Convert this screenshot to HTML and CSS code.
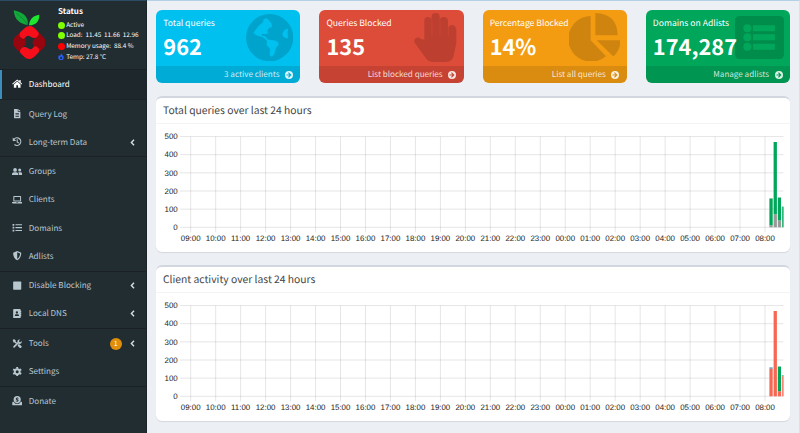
FILE: index.html
```html
<!DOCTYPE html>
<html lang="en">
<head>
<meta charset="utf-8">
<title>Dashboard</title>
<link rel="stylesheet" href="styles.css">
</head>
<body>
<svg class="defs" width="0" height="0" aria-hidden="true">
  <symbol id="go" viewBox="0 0 24 24"><path fill-rule="evenodd" d="M12 0a12 12 0 1 0 0 24 12 12 0 0 0 0-24zM11.500 4 19.500 12l-8 8-2.300-2.200 4-4.200H4.500v-3.200h8.700l-4-4.200z"/></symbol>
  <symbol id="left" viewBox="0 0 10 14"><path d="M8 1.500 2.800 7 8 12.500" fill="none" stroke="currentColor" stroke-width="2.800"/></symbol>
</svg>
<div class="page">
  <aside class="sidebar">
    <div class="panel">
      <svg class="logo" viewBox="0 0 98 147">
        <path fill="#12a83a" d="M44 45C22 42 4 30 2 1c24 4 46 18 42 44z"/>
        <path fill="#1fe62e" d="M48 46c2-20 12-29 31-32 0 20-10 31-31 32z"/>
        <path fill="none" stroke="#0b7a30" stroke-width="2" d="M10 10c18 14 26 20 34 36"/>
        <path fill="#97060f" d="M23 67C9 77 0 85 0 97s9 20 22 31c8 6 18 2 19-5-10-3-13-8-7-16 8-8 6-18-1-22-8-4-11-10-10-18zM75 128c14-10 23-18 23-30s-9-20-22-31c-8-6-18-2-19 5 10 3 13 8 7 16-8 8-6 18 1 22 8 4 11 10 10 18z"/>
        <path fill="#f60f1b" d="M22 67c8-8 17-19 28-19 10 0 16 8 25 17 5 6 0 17-10 19-8 1-12-6-19-7-8-1-9 11-16 9-10-3-13-13-8-19zM76 128c-8 8-17 19-28 19-10 0-16-8-25-17-5-6 0-17 10-19 8-1 12 6 19 7 8 1 9-11 16-9 10 3 13 13 8 19z"/>
      </svg>
      <div class="status">
        <b>Status</b>
        <span><i class="dot ok"></i>Active</span>
        <span><i class="dot ok"></i>Load:&nbsp; 11.45&nbsp; 11.66&nbsp; 12.96</span>
        <span><i class="dot bad"></i>Memory usage:&nbsp; 88.4 %</span>
        <span><svg class="flame" viewBox="0 0 12 14"><path fill-rule="evenodd" d="M6 0c0 3 5.500 5 5.500 9A5.500 5.500 0 0 1 .5 9c0-2.200.8-3.800 2-5l1 2.200C5 5 6 3 6 0zm.5 6.500C5.500 8 4 8.500 4 10.200a2.300 2.300 0 0 0 4.600 0C8.600 8.800 7 8 6.500 6.500z"/></svg>Temp: 27.8 °C</span>
      </div>
    </div>
    <nav>
      <ul class="active">
        <li><svg viewBox="0 0 18 16"><path d="M9 .8.3 8.200l1 1.200L9 3l7.700 6.400 1-1.200-2.700-2.400V1.500h-2.200v2.400zM9 4.400 3.200 9.300V15h4.300v-4.300h3V15h4.300V9.300z"/></svg>Dashboard</li>
      </ul>
      <ul>
        <li><svg viewBox="0 0 18 16"><path fill-rule="evenodd" d="M3.500 0H10v4.500h4.500V16h-11zM11 0l3.500 3.500H11zM6 7v1.200h6V7zm0 2.500v1.200h6V9.500zM6 12v1.200h6V12z"/></svg>Query Log</li>
        <li><svg viewBox="0 0 18 16"><path d="M3.700 3.500A6.600 6.600 0 1 1 4.300 13" fill="none" stroke="currentColor" stroke-width="2"/><path d="M1.300.8v6h6z"/><path d="M9 4v4.500l3 2" fill="none" stroke="currentColor" stroke-width="1.800"/></svg>Long-term Data<svg class="caret"><use href="#left"/></svg></li>
      </ul>
      <ul>
        <li><svg viewBox="0 0 18 16"><circle cx="5.300" cy="5" r="3.200"/><circle cx="13.300" cy="5.300" r="2.600"/><path d="M0 14v-1.500C0 10.300 1.600 9 3.500 9h3.700c2 0 3.600 1.300 3.600 3.500V14zM11.800 14h6.200v-1.700C18 10.300 16.700 9 15 9h-3.300l-.8.200c.7.900 1 2 1 3.200z"/></svg>Groups</li>
        <li><svg viewBox="0 0 18 16"><path fill-rule="evenodd" d="M3.300 1.500h11.400q1 0 1 1V11H2.300V2.500q0-1 1-1zM4 3.200v6.200h10V3.200zM0 12h7l.6.800h2.800L11 12h7v1q0 1.800-1.800 1.800H1.800Q0 14.800 0 13z"/></svg>Clients</li>
        <li><svg viewBox="0 0 18 16"><path d="M1 1.500h3v3H1zm0 5h3v3H1zm0 5h3v3H1zM6 2h11.500v2H6zm0 5h11.500v2H6zm0 5h11.500v2H6z"/></svg>Domains</li>
        <li><svg viewBox="0 0 18 16"><path fill-rule="evenodd" d="m9 0 7 2.800c0 6-2 10.700-7 13.200-5-2.500-7-7.200-7-13.200zm0 2.200v11.500c3.200-1.900 4.800-5 5-9.500z"/></svg>Adlists</li>
      </ul>
      <ul>
        <li><svg viewBox="0 0 18 16"><rect x="2" y="1" width="14" height="14" rx="1.300"/></svg>Disable Blocking<svg class="caret"><use href="#left"/></svg></li>
        <li><svg viewBox="0 0 18 16"><path fill-rule="evenodd" d="M3.500 0h10Q15 0 15 1.500V3h1v2.500h-1v1h1V9h-1v1h1v2.500h-1v2q0 1.500-1.500 1.500h-10Q2 16 2 14.500v-13Q2 0 3.500 0zm5 4a2 2 0 1 0 0 4 2 2 0 0 0 0-4zM5 12h7v-1c0-1.300-1-2-2-2H7c-1 0-2 .7-2 2z"/></svg>Local DNS<svg class="caret"><use href="#left"/></svg></li>
      </ul>
      <ul>
        <li><svg viewBox="0 0 18 16"><path d="m3.500 13.500 8-8" stroke="currentColor" stroke-width="2.800" stroke-linecap="round"/><path d="M16.700 3.200 14.500 5.400l-2-.4-.4-2L14.300.8c-2.300-.7-4.900.9-4.900 3.600 0 2.500 1.900 4.100 3.900 4.100 2.600 0 4.200-2.600 3.400-5.300zM1.300 2 3.300 0l3 2.300v2L9 7 7.300 8.700 4.600 6h-2zM10 10l2-1.500 4.600 4.200q.6.900-.2 1.700l-1 1q-.9.700-1.700 0L10 12z"/></svg>Tools<em>1</em><svg class="caret"><use href="#left"/></svg></li>
        <li><svg viewBox="0 0 18 16"><circle cx="9" cy="8" r="4.200" fill="none" stroke="currentColor" stroke-width="3.200"/><path d="M9 0v3M9 13v3M2 4l2.700 1.500M13.300 10.500 16 12M2 12l2.700-1.500M13.300 5.500 16 4" stroke="currentColor" stroke-width="3.300"/></svg>Settings</li>
      </ul>
      <ul>
        <li><svg viewBox="0 0 18 16"><path fill-rule="evenodd" d="M9 0a6.200 6.200 0 1 1 0 12.400A6.200 6.200 0 0 1 9 0zM8.400 2v1C5.800 3.400 5.900 6.200 8.200 6.800c1.700.4 1.500 1.400.2 1.400L6.600 7.800 6.300 9l2.100.5v1h1.200v-1c2.700-.5 2.500-3.300.1-3.900-1.600-.4-1.300-1.300-.1-1.300l1.500.3.400-1.200L9.600 3V2z"/><path d="M1.500 10h1.300c.7 1.400 1.700 2.400 3 3.200h6.400c1.300-.8 2.300-1.800 3-3.200h1.300q1 0 1 1v4q0 1-1 1h-15q-1 0-1-1v-4q0-1 1-1z"/></svg>Donate</li>
      </ul>
    </nav>
  </aside>
  <main>
    <section class="cards">
      <article class="card aqua">
        <div class="body"><p>Total queries</p><h3>962</h3></div>
        <svg class="art globe" viewBox="294 41 142 142"><path fill-rule="evenodd" d="M365 41a71 71 0 1 0 0 142 71 71 0 0 0 0-142zM316 98L332 76 345 66 347 57 356 54 363 60 371 70 372 80 364 82 358 90 361 98 352 102 341 100 342 106 352 108 360 118 375 119 390 124 392 133 384 143 378 163 371 169 365 164 366 145 356 134 357 121 345 111 328 106zM420 85l-10 3-7 12 3 9 9 5 5 0-1-14z"/></svg>
        <footer>3 active clients<svg><use href="#go"/></svg></footer>
      </article>
      <article class="card red">
        <div class="body"><p>Queries Blocked</p><h3>135</h3></div>
        <svg class="art hand" viewBox="314 38 127 147"><path d="M345 118V61q0-11 10-11t12 10V48q1-10 12-10t12 10v11q2-9 13-9t12 11v22q3-9 12-9t13 11v43l-7 34q-3 23-25 23h-38q-12 0-20-10l-34-46q-6-10 3-16 9-5 16 4z"/><path d="M368 60v48M392 58v50M417 75v34" fill="none" stroke="#dd4b39" stroke-width="1.500"/></svg>
        <footer>List blocked queries<svg><use href="#go"/></svg></footer>
      </article>
      <article class="card orange">
        <div class="body"><p>Percentage Blocked</p><h3>14%</h3></div>
        <svg class="art pie" viewBox="281 38 155 146"><path d="M346 47v73l46 48q-18 16-44 16a68 68 0 0 1-2-137zM360 38q66 2 67 67h-67zM364 120h72q-1 29-22 49z"/></svg>
        <footer>List all queries<svg><use href="#go"/></svg></footer>
      </article>
      <article class="card green">
        <div class="body"><p>Domains on Adlists</p><h3>174,287</h3></div>
        <svg class="art list" viewBox="300 47 147 129"><path fill-rule="evenodd" d="M314 47h119q14 0 14 14v101q0 14-14 14H314q-14 0-14-14V61q0-14 14-14zm23 25a12 12 0 1 0 0 24 12 12 0 0 0 0-24zm0 27a12 12 0 1 0 0 24 12 12 0 0 0 0-24zm0 28a12 12 0 1 0 0 24 12 12 0 0 0 0-24zM357 75q-3 0-3 3v12q0 3 3 3h60q3 0 3-3V78q0-3-3-3zm0 27q-3 0-3 3v12q0 3 3 3h60q3 0 3-3v-12q0-3-3-3zm0 28q-3 0-3 3v12q0 3 3 3h60q3 0 3-3v-12q0-3-3-3z"/></svg>
        <footer>Manage adlists<svg><use href="#go"/></svg></footer>
      </article>
    </section>
    <section class="box">
      <h2>Total queries over last 24 hours</h2>
      <svg class="chart" id="queries" viewBox="0 0 634 127"></svg>
    </section>
    <section class="box">
      <h2>Client activity over last 24 hours</h2>
      <svg class="chart" id="clients" viewBox="0 0 634 127"></svg>
    </section>
  </main>
</div>
<script src="charts.js"></script>
</body>
</html>
```
FILE: styles.css
```css
* { box-sizing: border-box; margin: 0; padding: 0; }
body {
  width: 800px; height: 433px; overflow: hidden;
  font-family: "Noto Sans CJK SC", "Noto Sans", sans-serif;
  text-rendering: geometricPrecision;
  font-size: 8.080px; line-height: 14px; background: #ecf0f5; color: #444;
}
.defs { position: absolute; }
.page { display: flex; height: 433px; }
.sidebar { width: 147px; height: 433px; background: #222d32; color: #b8c7ce; border-top: 1px solid #2b4c63; border-right: 1px solid #1b2529; }
.panel { display: flex; height: 68px; padding: 5px 0 0 12.500px; }
.logo { width: 32.700px; height: 49px; margin-top: 4px; flex: none; }
.status { display: flex; flex-direction: column; margin-left: 12.800px; font-size: 6.350px; line-height: 10.600px; color: #fff; white-space: nowrap; }
.status b { font-size: 8px; line-height: 12px; margin: -.5px 0 2.400px; }
.status span { display: flex; align-items: center; }
.dot { width: 7px; height: 7px; border-radius: 50%; margin-right: 1.200px; }
.ok { background: #7fff00; }
.bad { background: #f00; }
.flame { width: 6px; height: 7px; fill: #2962ff; margin: 0 1.700px 0 .5px; flex: none; }
nav ul { list-style: none; border-top: 1px solid #1a2226; padding-top: .3px; }
nav li { display: flex; align-items: center; height: 28.200px; padding: .8px 11.500px 0 12px; white-space: nowrap; }
nav li > svg { position: relative; top: -.7px; }
nav li > svg:first-child { width: 10.400px; height: 9.300px; fill: currentColor; margin-right: 6.300px; flex: none; }
nav .active li { background: #1e282c; border-left: 2px solid #3c8dbc; padding: 0 0 0 10px; color: #fff; height: 28.500px; }
nav .caret { width: 5px; height: 7px; margin-left: auto; color: #d5dfe4; }
nav em { margin-left: auto; width: 12px; height: 12px; border-radius: 6px; background: #e08e0b; color: #fff; font: 7px/12px "Noto Sans CJK SC", sans-serif; text-align: center; flex: none; }
nav em + .caret { margin-left: 7.800px; }
main { width: 653px; border-top: 1px solid #b5cfe4; border-right: 1px solid #dce1e8; padding: 9px 9px 0 9.300px; }
.cards { display: grid; grid-template-columns: repeat(4, 1fr); column-gap: 19px; height: 72.700px; }
.card { position: relative; display: flex; flex-direction: column; border-radius: 6px; overflow: hidden; color: #fff; }
.aqua { background: #00c0ef; } .red { background: #dd4b39; } .orange { background: #f39c12; } .green { background: #00a65a; }
.body { height: 56px; padding: 6px 7px 0; position: relative; z-index: 1; white-space: nowrap; }
.body p { font-size: 8.600px; line-height: 14px; }
.body h3 { font-size: 21.800px; line-height: 30px; font-weight: 700; margin-top: 2px; }
.card footer { flex: 1; background: rgba(0,0,0,.1); color: rgba(255,255,255,.8); display: flex; align-items: center; justify-content: flex-end; padding: 1px 7.500px 0 0; }
.card footer svg { width: 8px; height: 8px; margin-left: 5.500px; fill: #fffd; }
.art { position: absolute; fill: rgba(0,0,0,.15); }
.globe { left: 89.700px; top: 3.700px; width: 47.300px; height: 47.300px; }
.hand { left: 95px; top: 2.700px; width: 42.300px; height: 49px; }
.pie { left: 86px; top: 2.700px; width: 51.700px; height: 48.600px; }
.list { left: 89px; top: 5.700px; width: 49px; height: 43px; }
.box { height: 155.500px; margin-top: 13.500px; background: #fff; border-top: 2px solid #d2d6de; border-radius: 6px; box-shadow: 0 1px 1px rgba(0,0,0,.1); }
.box h2 { height: 25.500px; padding-left: 6.700px; border-bottom: 1px solid #f4f4f4; font-weight: 400; font-size: 10.320px; line-height: 24px; }
.chart { display: block; width: 634px; height: 127px; }
.chart line { stroke: #000; stroke-opacity: .1; stroke-width: 1; }
.chart text { font: 7.900px "Liberation Sans", Arial, sans-serif; fill: #222; }
```
FILE: charts.js
```javascript
const NS = "http://www.w3.org/2000/svg";
const BASE = 103.300, STEP = 18.150, FIRST = 34.700, HOUR = 24.970;

function add(svg, tag, attrs, text) {
  const el = document.createElementNS(NS, tag);
  for (const key in attrs) el.setAttribute(key, attrs[key]);
  if (text !== undefined) el.textContent = text;
  svg.appendChild(el);
}

// Each bar: [x, width, [value, color] segments stacked upwards]
function draw(id, bars) {
  const svg = document.getElementById(id);
  for (let i = 0; i <= 5; i++) {
    const y = BASE - i * STEP;
    add(svg, "line", { x1: 24, x2: 627.500, y1: y, y2: y });
    add(svg, "text", { x: 21.700, y: y + 2.700, "text-anchor": "end" }, i * 100);
  }
  for (let i = 0; i < 24; i++) {
    const x = FIRST + i * HOUR;
    add(svg, "line", { x1: x, x2: x, y1: BASE - 5 * STEP, y2: BASE + 5 });
    add(svg, "text", { x, y: BASE + 14, "text-anchor": "middle" }, String((i + 9) % 24).padStart(2, "0") + ":00");
  }
  for (const [x, width, parts] of bars) {
    let y = BASE;
    for (const [value, fill] of parts) {
      const height = value * STEP / 100;
      y -= height;
      add(svg, "rect", { x, y, width, height, fill });
    }
  }
}

const G = "#00a65a", N = "#999", R = "#f56954", B = "#3c8dbc";
draw("queries", [
  [613.400, 3.300, [[12, N], [147, G]]],
  [617.600, 3.300, [[72, N], [398, G]]],
  [621.800, 3.200, [[38, N], [126, G]]],
  [625.900, 1.800, [[114, "#30b779"]]]
]);
draw("clients", [
  [613.400, 3.300, [[153, R], [6, B]]],
  [617.600, 3.300, [[470, R]]],
  [621.800, 3.200, [[28, R], [136, G]]],
  [625.900, 1.800, [[111, "#f88778"], [4, G]]]
]);
```
